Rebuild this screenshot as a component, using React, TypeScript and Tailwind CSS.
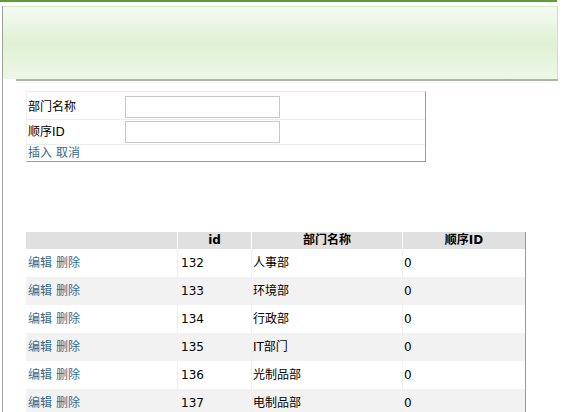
import React from "react";

const rows = [
  { id: 132, name: "人事部", order: 0 },
  { id: 133, name: "环境部", order: 0 },
  { id: 134, name: "行政部", order: 0 },
  { id: 135, name: "IT部门", order: 0 },
  { id: 136, name: "光制品部", order: 0 },
  { id: 137, name: "电制品部", order: 0 },
];

const font = "font-['DejaVu_Sans','Noto_Sans_CJK_SC',sans-serif]";

export default function App() {
  return (
    <div className={`w-[565px] h-[412px] bg-white overflow-hidden text-[12px] text-black ${font}`}>
      {/* top green rule */}
      <div className="h-[2px] w-[557px] bg-[#5b9f35]" />
      <div className="ml-[2px] h-[410px] border-l border-[#9aa59a]">
        {/* banner */}
        <div className="mt-[4px] w-[555px] h-[73px] border-t border-[#d4ebc4] border-r border-r-[#cfe3c2] bg-gradient-to-b from-[#f5faf2] via-[#dff1d3] to-[#edf7e7]" />
        <div className="ml-[13px] w-[542px] h-[2px] bg-[#a9b9a1]" />

        {/* insert form */}
        <div className="ml-[23px] mt-[10px] w-[400px] border-t border-[#ececec] border-r border-r-[#9a9a9a] border-b border-b-[#9a9a9a] border-l border-l-[#f0f0f0]">
          <div className="h-[3px]" />
          <div className="flex h-[25px] items-center border-b border-[#ececec]">
            <div className="w-[98px] pl-[1px]">部门名称</div>
            <input className="h-[22px] w-[155px] border border-[#c8c8c8] bg-white outline-none" />
          </div>
          <div className="flex h-[25px] items-center border-b border-[#ececec]">
            <div className="w-[98px] pl-[1px]">顺序ID</div>
            <input className="h-[22px] w-[155px] border border-[#c8c8c8] bg-white outline-none" />
          </div>
          <div className="flex h-[16px] items-center gap-[4px] pl-[1px] text-[#3a6a8a]">
            <a href="#">插入</a>
            <a href="#">取消</a>
          </div>
        </div>

        {/* data table */}
        <div className="ml-[23px] mt-[70px] w-[500px] border-r border-[#9a9a9a]">
          <div className="grid grid-cols-[152px_74px_151px_122px] h-[17px] bg-[#e0e0e0] font-bold leading-[16px]">
            <div className="border-r border-white" />
            <div className="border-r border-white text-center">id</div>
            <div className="border-r border-white text-center">部门名称</div>
            <div className="text-center">顺序ID</div>
          </div>
          {rows.map((r, i) => (
            <div
              key={r.id}
              className={`grid grid-cols-[152px_74px_151px_122px] h-[28px] ${i % 2 === 1 ? "bg-[#f2f2f2]" : "bg-white"}`}
            >
              <div className="flex items-center gap-[4px] pl-[2px] border-r border-[#f0f0f0] text-[#3a6a8a]">
                <a href="#">编辑</a>
                <a href="#">删除</a>
              </div>
              <div className="flex items-center pl-[3px] border-r border-[#f0f0f0]">{r.id}</div>
              <div className="flex items-center pl-[1px] border-r border-[#f0f0f0]">{r.name}</div>
              <div className="flex items-center pl-[1px]">{r.order}</div>
            </div>
          ))}
        </div>
      </div>
    </div>
  );
}
